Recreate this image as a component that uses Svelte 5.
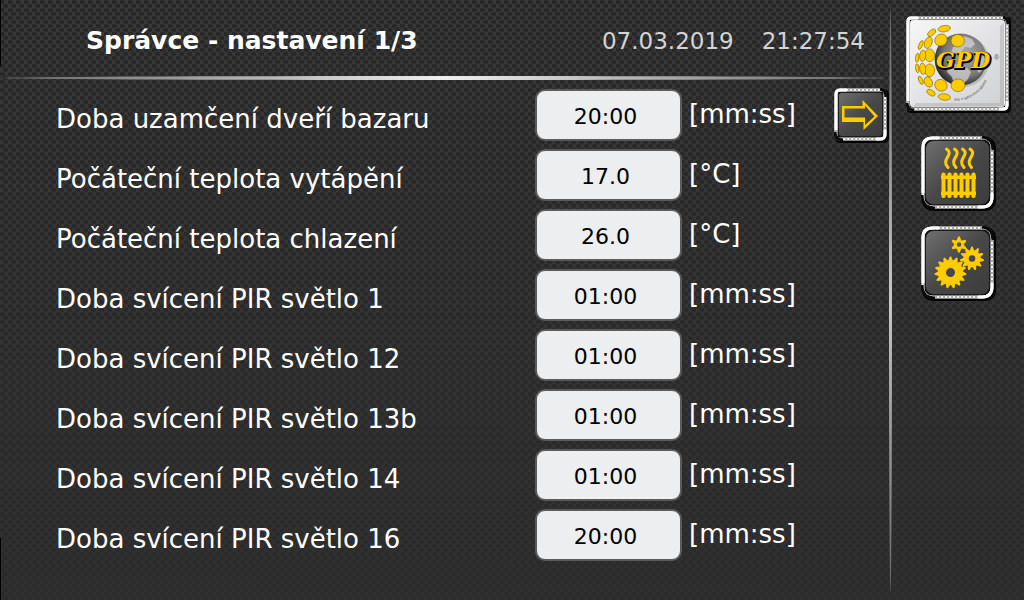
<script lang="ts">
	interface Setting {
		id: string;
		label: string;
		value: string;
		unit: string;
	}

	let settings: Setting[] = $state([
		{ id: 'lock', label: 'Doba uzamčení dveří bazaru', value: '20:00', unit: '[mm:ss]' },
		{ id: 'heating', label: 'Počáteční teplota vytápění', value: '17.0', unit: '[°C]' },
		{ id: 'cooling', label: 'Počáteční teplota chlazení', value: '26.0', unit: '[°C]' },
		{ id: 'pir1', label: 'Doba svícení PIR světlo 1', value: '01:00', unit: '[mm:ss]' },
		{ id: 'pir12', label: 'Doba svícení PIR světlo 12', value: '01:00', unit: '[mm:ss]' },
		{ id: 'pir13b', label: 'Doba svícení PIR světlo 13b', value: '01:00', unit: '[mm:ss]' },
		{ id: 'pir14', label: 'Doba svícení PIR světlo 14', value: '01:00', unit: '[mm:ss]' },
		{ id: 'pir16', label: 'Doba svícení PIR světlo 16', value: '20:00', unit: '[mm:ss]' }
	]);

	// cx, cy, rx, ry, rotation
	const dots = [
		[38.3, 12.7, 6.2, 3.2, -8],
		[25.7, 16.7, 4.8, 2.6, -38],
		[51.7, 24.7, 6.7, 6.2, 0],
		[35, 24, 6.4, 5.8, -35],
		[22.3, 26.7, 3.7, 6, 22],
		[14.7, 29, 1.8, 4.8, 24],
		[23.7, 39.3, 4.9, 6.4, 0],
		[16.7, 39.7, 3, 5.7, 6],
		[11.3, 41.7, 1.7, 4.5, 6],
		[23.7, 54.3, 4.9, 6.4, 0],
		[16.7, 52.7, 3, 5.7, -6],
		[11.3, 52.3, 1.7, 4.5, -6],
		[14.7, 64.3, 1.9, 4.4, -24],
		[22.3, 66, 3.9, 5.4, -28],
		[35, 69.3, 6.4, 5.7, 30],
		[52, 69.3, 7, 6.3, 0],
		[25, 76.7, 4.6, 2.6, 30],
		[38.3, 81, 6.2, 3.2, 6]
	];

	const ribs = [22.5, 28.5, 34.5, 40.5, 46.5, 52.5];
	const waves = [26, 34, 42, 49.5];

	function gear(cx: number, cy: number, outer: number, inner: number, hole: number, teeth: number) {
		const points: string[] = [];
		const step = Math.PI / teeth;
		for (let i = 0; i < teeth; i++) {
			const a = 2 * i * step - Math.PI / 2;
			for (const [r, d] of [
				[outer, -0.2],
				[outer, 0.2],
				[inner, 0.85],
				[inner, 1.15]
			]) {
				points.push(`${cx + r * Math.cos(a + d * step)} ${cy + r * Math.sin(a + d * step)}`);
			}
		}
		return `M${points.join('L')}ZM${cx - hole} ${cy}a${hole} ${hole} 0 1 0 ${2 * hole} 0a${hole} ${hole} 0 1 0 ${-2 * hole} 0Z`;
	}
</script>

<svelte:head>
	<title>Správce - nastavení 1/3</title>
</svelte:head>

{#snippet frame(w: number, h: number, r: number, fill: string)}
	<defs>
		<linearGradient id="dark" x1="0" y1="0" x2="1" y2="1">
			<stop offset="0" stop-color="#707070" />
			<stop offset="0.5" stop-color="#484848" />
			<stop offset="1" stop-color="#3c3c3c" />
		</linearGradient>
		<linearGradient id="light" x1="0" y1="0" x2="1" y2="1">
			<stop offset="0" stop-color="#f6f6f6" />
			<stop offset="1" stop-color="#cfd0d2" />
		</linearGradient>
	</defs>
	<rect x="1" y="1" width={w - 1} height={h - 1} rx={r} fill="#050505" />
	<rect x="2" y="2" width={w - 6} height={h - 6} rx={r - 1} fill="none" stroke="#f4f4f4" stroke-width="3" />
	<rect
		x="2"
		y="2"
		width={w - 6}
		height={h - 6}
		rx={r - 1}
		fill="none"
		stroke="#a8a8a8"
		stroke-width="3"
		stroke-dasharray="2 2"
	/>
	<path
		d="M{w - r - 4} 1Q{w - 3} 2 {w - 3} {r + 4}M1 {h - r - 6}Q1 {h - 3} {r + 4} {h - 3}"
		fill="none"
		stroke="#0a0a0a"
		stroke-width="3"
	/>
	<path d="M2 {h - r - 8}V{r + 1}Q2 2 {r + 1} 2H{r + 8}" fill="none" stroke="#fff" stroke-width="3" />
	<path
		d="M{w - r - 8} {h - 4}H{w - r - 4}Q{w - 4} {h - 4} {w - 4} {h - r - 4}V{h - r - 8}"
		fill="none"
		stroke="#fff"
		stroke-width="3"
	/>
	<rect
		x="4.500"
		y="4.500"
		width={w - 11}
		height={h - 11}
		rx={r - 2}
		fill="url(#{fill})"
		stroke={fill === 'dark' ? '#1c1c1c' : '#eee'}
	/>
{/snippet}

<div class="screen">
	<main>
		<header>
			<h1>Správce - nastavení 1/3</h1>
			<time>07.03.2019</time>
			<time>21:27:54</time>
		</header>

		<div class="rule"></div>

		<form>
			<div class="settings">
				{#each settings as setting (setting.id)}
					<div class="row">
						<label for={setting.id}>{setting.label}</label>
						<input id={setting.id} type="text" bind:value={setting.value} />
						<span class="unit">{setting.unit}</span>
					</div>
				{/each}
			</div>

			<button type="button" aria-label="Další strana">
				<svg width="55" height="55" viewBox="0 0 55 55">
					{@render frame(55, 55, 5, 'dark')}
					<path
						d="M8 18H28.500V12L44 28 29.500 42V34H8ZM10.500 20.500V29.500H31V37L40.500 28.500 31 17.500V20.500Z"
						fill="#fc0"
						fill-rule="evenodd"
					/>
				</svg>
			</button>
		</form>
	</main>

	<div class="divider"></div>

	<nav>
		<button class="logo" type="button" aria-label="GPD">
			<svg width="105" height="97" viewBox="0 0 105 97">
				<defs>
					<radialGradient id="globe" cx="0.6" cy="0.4" r="0.65">
						<stop offset="0" stop-color="#aaa" />
						<stop offset="0.65" stop-color="#777" />
						<stop offset="1" stop-color="#222" />
					</radialGradient>
					<path id="motto" d="M48 85Q76 84 84 56" />
				</defs>
				{@render frame(105, 97, 4, 'light')}
				<path d="M7 91L10 87H94L98 91ZM98 7L94 10V87L98 91Z" fill="#999" opacity="0.35" />
				<circle cx="57" cy="45" r="26" fill="#999" opacity="0.5" />
				<circle cx="54.700" cy="43.500" r="26" fill="url(#globe)" />
				<path
					d="M58 20l8 3 3 5-4 4-6-1-3 4-6 3-5-1 2-6 6-2 3-4zM42 52l8-4 9 2 6 6-3 7-5 5-2 4-7-3-2-8-5-5zM70 45l6-8 3 6-2 10-4 4-4-6z"
					fill="#ccc"
					opacity="0.8"
				/>
				{#each dots as [cx, cy, rx, ry, turn]}
					<ellipse
						{cx}
						{cy}
						{rx}
						{ry}
						transform="rotate({turn} {cx} {cy})"
						fill="#fc0"
						stroke="#654c00"
						stroke-width="0.5"
					/>
				{/each}
				<text class="brand shadow" x="31" y="53">GPD</text>
				<text class="brand" x="30" y="52">GPD</text>
				<text class="mark" x="88" y="44">®</text>
				<text class="motto"><textPath href="#motto">Ste v správnom pásme</textPath></text>
			</svg>
		</button>

		<button type="button" aria-label="Vytápění">
			<svg width="75" height="75" viewBox="0 0 75 75">
				{@render frame(75, 75, 10, 'dark')}
				{#each waves as x}
					<path
						d="M{x - 0.5} 13C{x + 8} 19 {x - 7} 23 {x + 1} 31.5"
						fill="none"
						stroke="#fc0"
						stroke-width="3"
						stroke-linecap="round"
					/>
				{/each}
				{#each ribs as x}
					<rect x={x - 2} y="36.500" width="4" height="25.500" rx="1.800" fill="#fc0" />
				{/each}
				<path d="M20 39.500H55V43H20ZM20 55.500H55V59H20Z" fill="#fc0" />
			</svg>
		</button>

		<button type="button" aria-label="Nastavení">
			<svg width="75" height="75" viewBox="0 0 75 75">
				{@render frame(75, 75, 10, 'dark')}
				<g fill="#fc0" fill-rule="evenodd">
					<path d={gear(29.5, 46.5, 16, 12.5, 4.5, 15)} />
					<path d={gear(51, 32.5, 12, 8.5, 3.3, 11)} />
					<path d={gear(38, 18.5, 8, 5, 2.3, 6)} />
				</g>
			</svg>
		</button>
	</nav>
</div>

<style>
	:global(body) {
		margin: 0;
		background: #303030;
	}

	.screen {
		box-sizing: border-box;
		display: grid;
		grid-template-columns: 1fr 3px 132px;
		min-height: 100vh;
		color: #fff;
		font-family: 'DejaVu Sans', Verdana, sans-serif;
		background:
			linear-gradient(#000, #000) left top / 1px 66px no-repeat,
			linear-gradient(#000, #000) left bottom / 1px 62px no-repeat,
			linear-gradient(rgba(45, 45, 45, 0), rgba(45, 45, 45, 0.8)),
			radial-gradient(ellipse 4px 3px at 2px 2px, #262626 40%, transparent) 0 0 / 8px 8px,
			radial-gradient(ellipse 4px 3px at 6px 6px, #262626 40%, transparent) 0 0 / 8px 8px,
			#393939;
	}

	header {
		display: flex;
		align-items: center;
		height: 76px;
		padding: 6px 24px 0 86px;
		box-sizing: border-box;
	}

	h1 {
		flex: 1;
		margin: 0;
		font-size: 25px;
		line-height: 32px;
	}

	time {
		margin-left: 28px;
		color: #d4d4d4;
		font-size: 23px;
		line-height: 32px;
	}

	.rule {
		height: 4px;
		margin: 0 4px;
		border-radius: 50%;
		background: linear-gradient(90deg, #666, #eee 50%, #666);
	}

	form {
		display: flex;
		align-items: flex-start;
		padding-top: 8px;
	}

	.settings {
		flex: 1;
		display: grid;
		gap: 8px;
		padding-top: 1px;
	}

	.row {
		display: grid;
		grid-template-columns: 1fr 147px 145px;
		column-gap: 7px;
		padding-left: 56px;
		font-size: 26px;
		line-height: 32px;
	}

	label {
		padding-top: 14px;
	}

	input {
		box-sizing: border-box;
		width: 100%;
		height: 52px;
		padding: 2px 6px 0 0;
		border: 2px solid #5a5a5a;
		border-radius: 10px;
		background: #edeef0;
		color: #000;
		font: 22px 'DejaVu Sans', Verdana, sans-serif;
		text-align: center;
	}

	.unit {
		padding-top: 9px;
	}

	button {
		display: block;
		padding: 0;
		border: none;
		background: none;
		cursor: pointer;
	}

	svg {
		display: block;
	}

	.divider {
		margin: 8px 0;
		border-radius: 50%;
		background: linear-gradient(#666, #c8c8c8 50%, #666);
	}

	nav {
		display: flex;
		flex-direction: column;
		align-items: center;
		gap: 15px;
		padding-top: 16px;
	}

	.logo {
		margin-bottom: 8px;
	}

	.brand {
		fill: #fc0;
		font:
			italic bold 22px 'DejaVu Serif',
			serif;
	}

	.shadow {
		fill: #000;
		stroke: #000;
		stroke-width: 2px;
	}

	.mark {
		fill: #555;
		font-size: 7px;
	}

	.motto {
		fill: #555;
		font-size: 4px;
	}
</style>
